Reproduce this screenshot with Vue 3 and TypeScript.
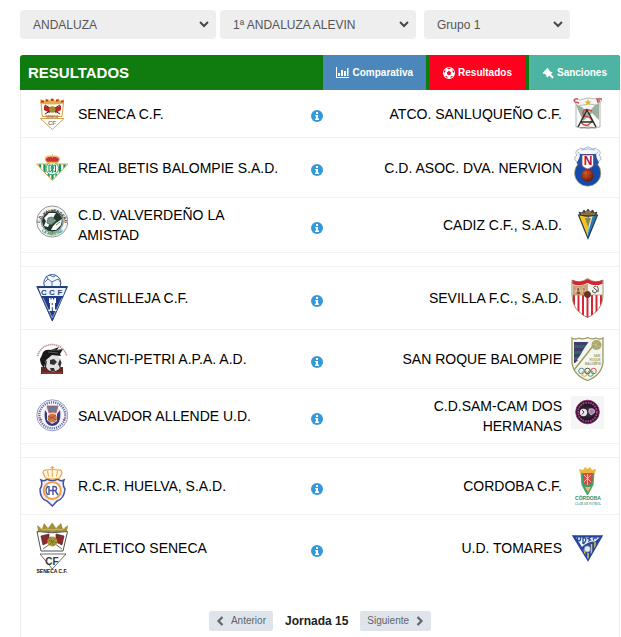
<script setup lang="ts">
import { ref } from 'vue'

interface Team {
  name: string
  crest: string
}

interface Match {
  home: Team
  away: Team
  height: number
}

interface Mark {
  text: string
  x: number
  y: number
  size: number
  fill: string
  arc?: string
}

const region = ref('ANDALUZA')
const category = ref('1ª ANDALUZA ALEVIN')
const group = ref('Grupo 1')
const round = ref(15)

const match = (home: string, homeCrest: string, away: string, awayCrest: string, height: number): Match => ({
  home: { name: home, crest: homeCrest },
  away: { name: away, crest: awayCrest },
  height,
})

const blocks: Match[][] = [
  [
    match('SENECA C.F.', 'seneca', 'ATCO. SANLUQUEÑO C.F.', 'sanlucar', 33),
    match('REAL BETIS BALOMPIE S.A.D.', 'betis', 'C.D. ASOC. DVA. NERVION', 'nervion', 45),
    match('C.D. VALVERDEÑO LA AMISTAD', 'valverde', 'CADIZ C.F., S.A.D.', 'cadiz', 40),
  ],
  [
    match('CASTILLEJA C.F.', 'castilleja', 'SEVILLA F.C., S.A.D.', 'sevilla', 48),
    match('SANCTI-PETRI A.P.A. A.D.', 'sancti', 'SAN ROQUE BALOMPIE', 'sanroque', 44),
    match('SALVADOR ALLENDE U.D.', 'salvador', 'C.D.SAM-CAM DOS HERMANAS', 'samcam', 40),
  ],
  [
    match('R.C.R. HUELVA, S.A.D.', 'huelva', 'CORDOBA C.F.', 'cordoba', 42),
    match('ATLETICO SENECA', 'atletico', 'U.D. TOMARES', 'tomares', 52),
  ],
]

const mark = (text: string, x: number, y: number, size: number, fill: string, arc?: string): Mark => ({
  text,
  x,
  y,
  size,
  fill,
  arc,
})

// Lettering drawn over each crest
const marks: Record<string, Mark[]> = {
  seneca: [mark('SENECA', 16, 21, 3, '#8a7c68'), mark('CF', 16, 28, 6, '#807887')],
  valverde: [
    mark('C.D. VALVERDEÑO', 0, 0, 4, '#1c201e', '#arc-top'),
    mark('LA AMISTAD', 0, 0, 4, '#18804e', '#arc-low'),
  ],
  nervion: [mark('N', 17, 20, 12, '#aa123e')],
  castilleja: [mark('C', 8, 21, 8, '#274481'), mark('C', 16, 21, 8, '#274481'), mark('F', 24, 21, 8, '#274481')],
  sanroque: [
    mark('SAN', 26, 20, 3, '#a29b64'),
    mark('ROQUE', 24, 24, 3, '#a29b64'),
    mark('BALOMPIE', 22, 28, 3, '#a29b64'),
  ],
  cordoba: [mark('CÓRDOBA', 17, 35, 5, '#258c69'), mark('CLUB DE FUTBOL', 17, 40, 3, '#78ac9a')],
  atletico: [mark('CF', 16, 43, 10, '#383a38'), mark('SENECA C.F.', 16, 51, 5, '#111')],
}
</script>

<template>
  <svg class="sprite" width="0" height="0" aria-hidden="true">
    <defs>
      <radialGradient id="ball" cx="40%" cy="35%" r="65%">
        <stop offset="0" stop-color="#e0602c" />
        <stop offset="1" stop-color="#6e1806" />
      </radialGradient>
      <path id="arc-top" d="M4 21 A12.400 12.400 0 1 1 28.600 21" />
      <path id="arc-low" d="M2.200 19 A14.400 14.400 0 0 0 30.400 19" />
      <clipPath id="clip-betis"><path d="M.8 19H32L16.3 35Z" /></clipPath>
      <clipPath id="clip-sevilla"><path d="M1 18H32C32 32 26 39 16.5 43.5C7 39 1 32 1 18Z" /></clipPath>
      <clipPath id="clip-tomares"><path d="M3 15H30.500L17 38Z" /></clipPath>
    </defs>

    <symbol id="seneca" viewBox="0 0 32 33">
      <path d="M5 6L6.300 19.500L26 19.500L27.500 6Z" fill="#fff8ec" stroke="#d5a04d" />
      <path d="M4 6L4.500 2L8 4L10 1.500L13 4L16.300 .5L19 4L22.500 1.500L24.500 4L28 2L28 6Q16 9 4 6Z" fill="#e0b04e" />
      <path d="M5 4.500H8M10 3.500H12.500M15 3H17.500M20 3.500H22.500M25 4.500H27.500" stroke="#c73524" stroke-width="2" />
      <path d="M8 8.500L14 11V16L8 13ZM25 8.500L19 11V16L25 13Z" fill="#b52622" />
      <path d="M9 8L24 17M24 8L9 17" stroke="#352522" />
      <circle cx="16.300" cy="12.500" r="3.200" fill="#a28a34" />
      <path d="M4.500 21.500H28L16.300 32.500Z" fill="#fff" stroke="#d5a04d" />
    </symbol>

    <symbol id="betis" viewBox="0 0 32 45">
      <path d="M.5 19H32L16.300 35.500Z" fill="#fff" />
      <path d="M4 18V36M8.500 18V36M24 18V36M28.500 18V36M12.500 29V36M16.500 29V36M20.500 29V36" stroke="#12955a" stroke-width="2.300" clip-path="url(#clip-betis)" />
      <path d="M.5 19H32L16.300 35.500Z" fill="none" stroke="#d2ab54" />
      <circle cx="16.300" cy="23.500" r="6.300" fill="#eef8ef" stroke="#3fa571" />
      <path d="M16.300 19V28M13 20V27M13 20Q17 20 15 23.500Q18 25 13 27M19.500 20V27M19.500 20Q16 20 17.500 23.500Q15 25 19.500 27" fill="none" stroke="#139057" />
      <path d="M11 17.500Q8 14 11 12.500L16.300 11L21.500 12.500Q25 14 21.500 17.500Z" fill="#c83136" />
      <path d="M11.500 17.500Q7 12.500 11 11.500Q14 10 16.300 12Q18.500 10 21.500 11.500Q25.500 12.500 21.500 17.500M16.300 9V13" fill="none" stroke="#e0ab48" />
      <path d="M10.500 17.500H22" stroke="#e6b54d" stroke-width="1.600" />
    </symbol>

    <symbol id="valverde" viewBox="0 0 32 40">
      <circle cx="16.300" cy="16.500" r="15.600" fill="#f5f6f5" stroke="#777d79" stroke-width=".8" />
      <circle cx="16.300" cy="16.500" r="10.300" fill="#22392d" />
      <path d="M8 13L13 8L20 8L17 13L20 16L14 18L12 22L8 21L10 16ZM20 18L26 14L25 20L20 25L15 25L17 21Z" fill="#f7faf8" />
      <path d="M12 13L16 12L19 17L15 20L11 18ZM20 20L24 17" fill="#80948a" stroke="#3e5c4d" stroke-width=".7" />
      <circle cx="16.300" cy="16.500" r="11" fill="none" stroke="#557063" stroke-width=".8" />
    </symbol>

    <symbol id="sanlucar" viewBox="0 0 33 33">
      <path d="M5 5H29V30Q17 33 5 30Z" fill="#fafbf9" stroke="#9da39d" stroke-width=".8" />
      <path d="M5 8L11 10L17 16L24 8L28 6V23L21 16L12 24Z" fill="#9caf9f" />
      <path d="M2 3Q5 0 8 3L17 1L26 2Q29 0 31 3L26 8L17 7L7 9Z" fill="#f7f5f2" stroke="#a39d98" stroke-width=".7" />
      <path d="M17 2L18 4.500H20.500L18.500 6L19 8L17 7L15 8L15.500 6L13.500 4.500H16Z" fill="#dfb527" />
      <path d="M21 14Q13 10 12 16Q12 20 18 20Q24 24 17 28Q12 29 10 25" fill="none" stroke="#cf4949" stroke-width="1.500" />
      <path d="M7 30L16 13L25 30M10 25H22" fill="none" stroke="#292d2b" stroke-width="1.500" />
      <path d="M7 2Q2 1 4 5L8 6M31 2H26L27 6M26 4H29" stroke="#ce4f52" stroke-width="1.300" fill="none" />
      <path d="M9 31Q17 29 25 31" stroke="#857f74" fill="none" />
    </symbol>

    <symbol id="nervion" viewBox="0 0 33 45">
      <circle cx="16.700" cy="28" r="13.200" fill="#164aaa" stroke="#b9b05b" stroke-width=".7" />
      <path d="M7 5Q9 2 13 4Q17 0 21 4Q25 2 27 5Q31 7 28 10Q32 14 28 16L25 19H8L5 16Q2 13 6 10Q3 7 7 5Z" fill="#f3f6fa" stroke="#8799bd" stroke-width=".7" />
      <path d="M7 7Q11 10 9 15M27 7Q22 10 25 15M10 5Q17 3 24 5" fill="none" stroke="#9aaac8" stroke-width=".8" />
      <path d="M5.500 18Q9 13 9 9H25Q25 13 28 18L24 22H9Z" fill="#2352a8" />
      <path d="M11 10H22.500V20Q21 23 16.700 24Q12 23 11 20Z" fill="#fff" stroke="#a42c52" stroke-width=".7" />
      <circle cx="16.500" cy="30.500" r="6" fill="url(#ball)" />
      <path d="M16.500 25V36M11 30H22" stroke="#641b0b" stroke-width=".5" fill="none" opacity=".5" />
    </symbol>

    <symbol id="cadiz" viewBox="0 0 33 40">
      <path d="M7.500 10H26.500L17 33.500Z" fill="#f3c51c" />
      <path d="M17 10H26.500L17 33.500Z" fill="#267bbb" />
      <path d="M18 10H22L17 28Z" fill="#f0e5b4" />
      <path d="M14 13H20L17 22Z" fill="#8b8657" />
      <path d="M7.500 10H26.500L17 33.500Z" fill="none" stroke="#263d4e" stroke-width="1.200" />
      <path d="M9 10L8 7L11 8L13 5L15 7L17 4L19 7L22 5L23 8L26 7L25 10Q17 13 9 10Z" fill="#584939" stroke="#2a302f" stroke-width=".7" />
      <path d="M10 9H24M14 7H20" stroke="#bf9b49" />
    </symbol>

    <symbol id="castilleja" viewBox="0 0 32 48">
      <circle cx="16.300" cy="9" r="8.500" fill="#f3f7fd" stroke="#355591" />
      <path d="M12 5L16 8L22 5M16 8V13M9 8L12 5L10 2M22 5L25 9M13 1L18 3L20 1" fill="none" stroke="#5270a7" />
      <path d="M.8 12.500H31.500L16.300 47Z" fill="#1e3c83" stroke="#26427d" />
      <path d="M2.500 14H30L27 22H5.500Z" fill="#edf3fc" />
      <path d="M7 24L16.300 44L26 24" fill="none" stroke="#c9d5eb" stroke-width=".7" />
      <path d="M13 24H14.500V25.500H15.600V24H17V25.500H18.200V24H20V29H19V35L21 37H12L14 35V29H13Z" fill="#fff" />
      <path d="M16.300 37V33M16.300 29V31" stroke="#294481" fill="none" />
    </symbol>

    <symbol id="sancti" viewBox="0 0 32 44">
      <path d="M5 30H27V37H5Z" fill="#662724" />
      <circle cx="17" cy="26" r="8.500" fill="#dfe1df" />
      <path d="M14 23L18 22L21 25L18 28L14 27ZM9 26L11 23L10 30L12 33L9 31ZM24 22L25.500 26L24 31L22 27ZM14 31L18 31L19 34L15 34Z" fill="#303130" />
      <path d="M6 18Q7 12 15 13L23 10L21 13L27 12L24 17L25 19L16 18L10 23L8 31Q4 27 4 22Z" fill="#171817" />
      <path d="M12 15L22 16M15 13L24 13" stroke="#747673" stroke-width=".7" />
      <path d="M1.500 19Q5 8 16 7.500Q27 8 31 19" fill="none" stroke="#b58e8d" stroke-width="1.700" stroke-dasharray="1.300 .7" />
      <path d="M6 36H26" stroke="#9e4540" />
    </symbol>

    <symbol id="salvador" viewBox="0 0 32 40">
      <circle cx="16.300" cy="19.300" r="15.500" fill="#f8f7fb" stroke="#7982b3" stroke-width=".8" />
      <circle cx="16.300" cy="19.300" r="13" fill="none" stroke="#656da1" stroke-width="2.300" stroke-dasharray="1.200 1" />
      <circle cx="16.300" cy="20" r="10.300" fill="#f1eff4" />
      <path d="M9 14Q7 29 16.300 30Q26 29 24 14L21 18V25L16 28L11 24V17Z" fill="#343b78" />
      <path d="M11 10H22L20 17Q17 15 13 17Z" fill="#657c9d" stroke="#c65056" stroke-width=".8" />
      <circle cx="16.300" cy="22" r="4.600" fill="#d5763a" />
      <path d="M12 20L21 24M12 24L20 19" stroke="#76415a" stroke-width=".6" />
      <path d="M4 23L6 24M27 24L29 23" stroke="#c54e58" stroke-width="1.500" />
    </symbol>

    <symbol id="sevilla" viewBox="0 0 33 48">
      <path d="M1 6Q9 10 16.500 4.500Q24 10 32 6V20C32 32 26 39 16.500 43.500C7 39 1 32 1 20Z" fill="#fff" stroke="#a38b6b" />
      <path d="M1.500 6Q9 10 16.500 5Q24 10 31.500 6V10Q24 13 16.500 9Q9 13 1.500 10Z" fill="#d22630" />
      <path d="M3 18V44M7.500 18V44M12 18V44M16.500 18V44M21 18V44M25.500 18V44M30 18V44" stroke="#d52635" stroke-width="2" clip-path="url(#clip-sevilla)" />
      <path d="M2 11Q9 13 16 10V21H2Z" fill="#c9a274" />
      <path d="M5 20L6 14L8 13L10 20M12 20V13L14 14V20M3 17H15" fill="#8c4934" stroke="#f0cda6" stroke-width=".8" />
      <path d="M17 10Q24 13 31 10V21H17Z" fill="#f7f4ef" />
      <path d="M25 12Q21 13 24 15Q28 17 24 19Q20 18 22 16M26 12Q28 14 27 18" fill="none" stroke="#3b3b39" stroke-width=".9" />
      <path d="M1.500 21H31.500M16.500 10V24" stroke="#ad915d" stroke-width=".7" />
      <circle cx="16.500" cy="20.500" r="3" fill="#772e20" stroke="#533022" />
    </symbol>

    <symbol id="sanroque" viewBox="0 0 33 44">
      <path d="M1 1Q4 3 8 1Q12 3 16.500 .500Q21 3 25 1Q29 3 32 1V25Q31 38 16.500 43.500Q2 38 1 25Z" fill="#f3f6ef" stroke="#9a985c" stroke-width="1.300" />
      <path d="M3 5H17.500L15.500 8H3ZM3 11H13.500L11.500 14H3ZM3 17H10L8 20H3ZM3 23H7L4 26H3Z" fill="#403b70" />
      <path d="M3 8H15.500L13.500 11H3ZM3 14H11.500L10 17H3ZM3 20H8L6 23H3Z" fill="#2d6a57" />
      <path d="M3 33L22 9" stroke="#a59b62" stroke-width="1.500" />
      <circle cx="25.500" cy="8" r="5" fill="#aaa56d" />
      <path d="M21 7L30 10M23 4L27 13M28 3L23 12" stroke="#d0cf9f" stroke-width=".5" />
      <g fill="none" stroke-width="1"><circle cx="10.500" cy="34" r="2.800" stroke="#4f88af" /><circle cx="16.500" cy="34" r="2.800" stroke="#4f514c" /><circle cx="22.500" cy="34" r="2.800" stroke="#d35454" /><circle cx="13.500" cy="36.500" r="2.800" stroke="#caaf4b" /><circle cx="19.500" cy="36.500" r="2.800" stroke="#4b9d6c" /></g>
    </symbol>

    <symbol id="samcam" viewBox="0 0 33 40">
      <path d="M0 0H33V33H0Z" fill="#f5f5f5" />
      <circle cx="16.500" cy="16" r="11.800" fill="#25182a" stroke="#7d2f66" stroke-width=".8" />
      <circle cx="16.500" cy="16" r="9.400" fill="none" stroke="#b83b91" stroke-width="1.800" stroke-dasharray="1.700 .9" />
      <ellipse cx="16.500" cy="16" rx="8" ry="5.500" fill="#302532" />
      <circle cx="12.500" cy="16.500" r="3.700" fill="#e8e5e8" />
      <path d="M11 14L13 16L11 18.500" fill="none" stroke="#4a3c4e" />
      <path d="M18 13Q25 12 23.500 16.500L20 19Q17 17 18 13Z" fill="#a87fae" stroke="#dcc6dd" stroke-width=".8" />
    </symbol>

    <symbol id="huelva" viewBox="0 0 32 42">
      <path d="M5 15Q9 17 11 14Q16 17 22 14Q24 17 28 15Q26 20 29 24Q28 34 21 36L16.300 41L11 36Q4 34 4 24Q7 20 5 15Z" fill="#f0f1fa" stroke="#4951a1" stroke-width="1.500" />
      <circle cx="16.300" cy="25.500" r="8.500" fill="#fff" stroke="#e9a04a" stroke-width="2" />
      <path d="M13 21V30M13 25.500H17M17 21V30M17 21.500Q22 21 20 25.500H17M19 25.500L22 30M12 21Q8 25.500 12 30" fill="none" stroke="#4650a1" stroke-width="1.400" />
      <path d="M9.500 13L7 8Q7 4 12 5L16.300 4L21 5Q26 4 26 8L23.500 13Q16 15 9.500 13Z" fill="#fff7e4" stroke="#e9a548" stroke-width="1.200" />
      <path d="M16.300 1V12M14.500 2.500H18M11.500 6L12.500 11.500M21.500 6L20.500 11.500" stroke="#e9a548" fill="none" />
    </symbol>

    <symbol id="atletico" viewBox="0 0 32 52">
      <path d="M2 9L1 3L6 7L8 1L12 6L16.300 .5L20 6L25 1L27 7L32 3L31 9Q16 12 2 9Z" fill="#a4903c" />
      <path d="M4 6L8 8L11 7L16 8L21 7L25 8L29 6" fill="none" stroke="#e0d080" stroke-width=".7" />
      <path d="M1 9.500Q16 12 31.500 9.500L27 29H5Z" fill="#fff" stroke="#4e514e" />
      <path d="M5 14L13 12V20L7 23ZM28 14L20 12V20L26 23Z" fill="#96252b" stroke="#3b2929" stroke-width=".7" />
      <path d="M7 27L25 14M26 27L8 14" stroke="#494747" stroke-width=".8" />
      <circle cx="16.300" cy="19.500" r="5" fill="#aa9c35" />
      <path d="M12 18L21 21M14 15L18 24M20 16L13 23" stroke="#665e26" stroke-width=".6" />
      <path d="M4 32H30L16.300 47Z" fill="#fff" stroke="#454745" stroke-width=".8" />
    </symbol>

    <symbol id="cordoba" viewBox="0 0 33 42">
      <path d="M10 8H23L22 20L16.500 30L11 20Z" fill="#3fa26b" stroke="#4fa577" />
      <path d="M12 8H21.500V16Q20 20 16.700 20Q13 20 12 16Z" fill="#c94f47" />
      <path d="M13 10L20 17M20 10L13 17M16.500 9V20" stroke="#eed9a0" stroke-width=".8" />
      <path d="M9 8L8 4L12 5L14 2L16.500 4L19 2L21 5L25 4L24 8Z" fill="#eab641" />
      <path d="M14 22H20L17 27Z" fill="#ecbd53" />
    </symbol>

    <symbol id="tomares" viewBox="0 0 33 52">
      <path d="M2 14H31L17 38.500Z" fill="#2a479a" />
      <path d="M5 15.500H28.500L24 19.500Q17 19 11 25Z" fill="#f1f5fb" />
      <path d="M6.500 15V18Q9.500 20 9.500 17V15M12 22V15.500Q16.500 16 14 20L12 22M20 15L17 16.500L19.500 18L17 19.500M22.500 15.500V18.500M23 16H26" fill="none" stroke="#2c4b99" stroke-width="1.400" />
      <path d="M13.500 27V33M17 31V37M20.500 22V32M24 20V26" stroke="#e0c24a" stroke-width="1.500" clip-path="url(#clip-tomares)" />
      <circle cx="16.300" cy="27" r="3.200" fill="#e3eaf3" stroke="#526b9a" stroke-width=".7" />
      <path d="M2 14H31L17 38.500Z" fill="none" stroke="#22479d" stroke-width="1.400" />
    </symbol>

    <symbol id="info" viewBox="0 0 12 12">
      <circle cx="6" cy="6" r="6" fill="#3598db" />
      <path d="M4.200 5H7V8.600H8V10H4V8.600H5V6.300H4.200ZM5 2H7V4H5Z" fill="#fff" />
    </symbol>
    <symbol id="chevron-left" viewBox="0 0 8 10"><path d="M6.500 1L2.500 5L6.500 9" fill="none" stroke="currentColor" stroke-width="2.200" /></symbol>
    <symbol id="chevron-right" viewBox="0 0 8 10"><path d="M1.500 1L5.500 5L1.500 9" fill="none" stroke="currentColor" stroke-width="2.200" /></symbol>
    <symbol id="chevron-down" viewBox="0 0 10 7"><path d="M1 1L5 5L9 1" fill="none" stroke="#484848" stroke-width="2" /></symbol>
  </svg>

  <main class="page">
    <form class="filters" @submit.prevent>
      <label class="filter">
        <select v-model="region" aria-label="Federación"><option>ANDALUZA</option></select>
        <svg class="caret" width="10" height="7" aria-hidden="true"><use href="#chevron-down" /></svg>
      </label>
      <label class="filter">
        <select v-model="category" aria-label="Categoría"><option>1ª ANDALUZA ALEVIN</option></select>
        <svg class="caret" width="10" height="7" aria-hidden="true"><use href="#chevron-down" /></svg>
      </label>
      <label class="filter filter-group">
        <select v-model="group" aria-label="Grupo"><option>Grupo 1</option></select>
        <svg class="caret" width="10" height="7" aria-hidden="true"><use href="#chevron-down" /></svg>
      </label>
    </form>

    <section class="panel">
      <header class="panel-head">
        <h1>RESULTADOS</h1>
        <nav class="tabs">
          <a href="#comparativa" class="tab tab-compare">
            <svg width="13" height="11" viewBox="0 0 13 11" aria-hidden="true"><path d="M0 0H1V10H13V11H0ZM2 6H4V9H2ZM5 3H7V9H5ZM8 4H10V9H8ZM11 1H12.500V9H11Z" fill="#fff" /></svg>
            Comparativa
          </a>
          <a href="#resultados" class="tab tab-results">
            <svg width="12" height="12" viewBox="0 0 12 12" aria-hidden="true">
              <circle cx="6" cy="6" r="6" fill="#fff" />
              <path d="M6 3.800L8.200 5.400L7.300 8H4.700L3.800 5.400ZM4 1.200L6 2.300L8 1.200L7 .8H5ZM1 5.900L2.500 4.500L2.200 2.500L1 4.300ZM11 5.900L9.500 4.500L9.800 2.500L11 4.300ZM2.200 9L4 9.200L4.700 11L3 10.200ZM9.800 9L8 9.200L7.300 11L9 10.200Z" fill="#ff001f" />
            </svg>
            Resultados
          </a>
          <a href="#sanciones" class="tab tab-sanctions">
            <svg width="12" height="12" viewBox="0 0 12 12" aria-hidden="true"><path d="M.5 6L5 1.500L5.700 1L6.800 2.100L6.500 2.700L8.800 5L9.500 4.700L10.500 5.800L9.800 6.500L8.800 7.200L11.800 10L10.300 11.700L7.200 8.600L6 9.800L5.500 10.500L4.300 9.400L4.700 8.700L2.400 6.400L1.700 6.900Z" fill="#fff" /></svg>
            Sanciones
          </a>
        </nav>
      </header>

      <table v-for="(block, b) in blocks" :key="b" class="matches">
        <colgroup>
          <col class="col-crest" />
          <col class="col-home" />
          <col class="col-info" />
          <col />
          <col class="col-crest" />
        </colgroup>
        <tbody>
          <tr v-for="m in block" :key="m.home.name">
            <td class="crest-home">
              <svg class="crest" width="32" :height="m.height" aria-hidden="true">
                <use :href="'#' + m.home.crest" />
                <template v-for="t in marks[m.home.crest] ?? []" :key="t.text">
                  <text v-if="t.arc" class="ring" :font-size="t.size" :fill="t.fill"><textPath :href="t.arc" startOffset="50%">{{ t.text }}</textPath></text>
                  <text v-else class="mark" :x="t.x" :y="t.y" :font-size="t.size" :fill="t.fill">{{ t.text }}</text>
                </template>
              </svg>
            </td>
            <td class="home">{{ m.home.name }}</td>
            <td class="info">
              <button type="button" aria-label="Información del partido"><svg width="12" height="12" aria-hidden="true"><use href="#info" /></svg></button>
            </td>
            <td class="away">{{ m.away.name }}</td>
            <td class="crest-away">
              <svg class="crest" width="33" :height="m.height" aria-hidden="true">
                <use :href="'#' + m.away.crest" />
                <text v-for="t in marks[m.away.crest] ?? []" :key="t.text" class="mark" :x="t.x" :y="t.y" :font-size="t.size" :fill="t.fill">{{ t.text }}</text>
              </svg>
            </td>
          </tr>
        </tbody>
      </table>

      <footer class="pager">
        <button type="button" @click="round--"><svg width="8" height="10" aria-hidden="true"><use href="#chevron-left" /></svg>Anterior</button>
        <strong>Jornada {{ round }}</strong>
        <button type="button" @click="round++">Siguiente<svg width="8" height="10" aria-hidden="true"><use href="#chevron-right" /></svg></button>
      </footer>
    </section>
  </main>
</template>

<style>
body {
  background: #fff;
}
</style>

<style scoped>
.sprite {
  position: absolute;
}

.crest {
  overflow: visible;
}

.mark {
  font-weight: 700;
  text-anchor: middle;
  font-family: "Liberation Sans", Arial, sans-serif;
}

.ring {
  font-weight: 700;
  text-anchor: middle;
  font-family: "Liberation Sans", Arial, sans-serif;
}

.page {
  padding: 10px 1px 0 20px;
  color: #000;
  font: 14px/20px "Liberation Sans", Arial, sans-serif;
}

.filters {
  display: grid;
  grid-template-columns: 196fr 196fr 150fr;
  gap: 4px;
  margin-bottom: 16px;
  padding-right: 50px;
}

.filter {
  display: grid;
  align-items: center;
}

.filter-group {
  padding-left: 4px;
}

.filter select {
  grid-area: 1 / 1;
  width: 100%;
  height: 29px;
  padding: 0 28px 0 13px;
  border: 0;
  border-radius: 4px;
  appearance: none;
  background: #eee;
  color: #555;
  font: 12px/16px "Liberation Sans", Arial, sans-serif;
}

.caret {
  grid-area: 1 / 1;
  justify-self: end;
  margin-right: 7px;
  pointer-events: none;
}

.panel-head {
  display: flex;
  align-items: center;
  justify-content: space-between;
  overflow: hidden;
  border-radius: 3px 3px 0 0;
  background: #107c10;
}

h1 {
  margin: 0;
  padding-left: 8px;
  color: #fff;
  font-size: 15px;
  line-height: 20px;
}

.tabs {
  display: flex;
  gap: 4px;
}

.tab {
  display: flex;
  align-items: center;
  gap: 3px;
  height: 35px;
  padding: 0 13px;
  color: #fff;
  font-size: 10px;
  font-weight: 700;
  text-decoration: none;
}

.tab-compare {
  background: #4b87ba;
}

.tab-results {
  background: #ff001f;
}

.tab-sanctions {
  background: #4db3a2;
}

.panel {
  display: flow-root;
}

.matches {
  width: 100%;
  border-right: 1px solid #eee;
  border-left: 1px solid #eee;
  border-spacing: 0;
  table-layout: fixed;
}

.matches + .matches {
  padding-top: 13px;
}

.col-crest {
  width: 57px;
}

.col-home {
  width: 35%;
}

.col-info {
  width: 60px;
}

td {
  padding: 7px 0;
  border-bottom: 1px solid #f0f2f4;
  vertical-align: middle;
}

.matches + .matches tr:first-child td {
  border-top: 1px solid #f0f2f4;
}

.matches:last-of-type tr:last-child td {
  border-bottom: 0;
}

td svg {
  display: block;
}

.crest-home {
  padding-left: 15px;
}

.crest-away {
  padding-left: 9px;
}

.away {
  padding-left: 8px;
  text-align: right;
}

.info button {
  display: block;
  margin: 0 auto;
  padding: 5px 0 0;
  border: 0;
  background: none;
  cursor: pointer;
}

.pager {
  display: flex;
  align-items: center;
  justify-content: center;
  gap: 12px;
  padding: 30px 0 6px;
  border-right: 1px solid #eee;
  border-left: 1px solid #eee;
  color: #222;
  font-size: 12px;
}

.pager button {
  display: flex;
  align-items: center;
  gap: 7px;
  height: 20px;
  padding: 0 7px;
  border: 0;
  border-radius: 2px;
  background: #dfe4ea;
  color: #606468;
  font: 10px/16px "Liberation Sans", Arial, sans-serif;
}
</style>
